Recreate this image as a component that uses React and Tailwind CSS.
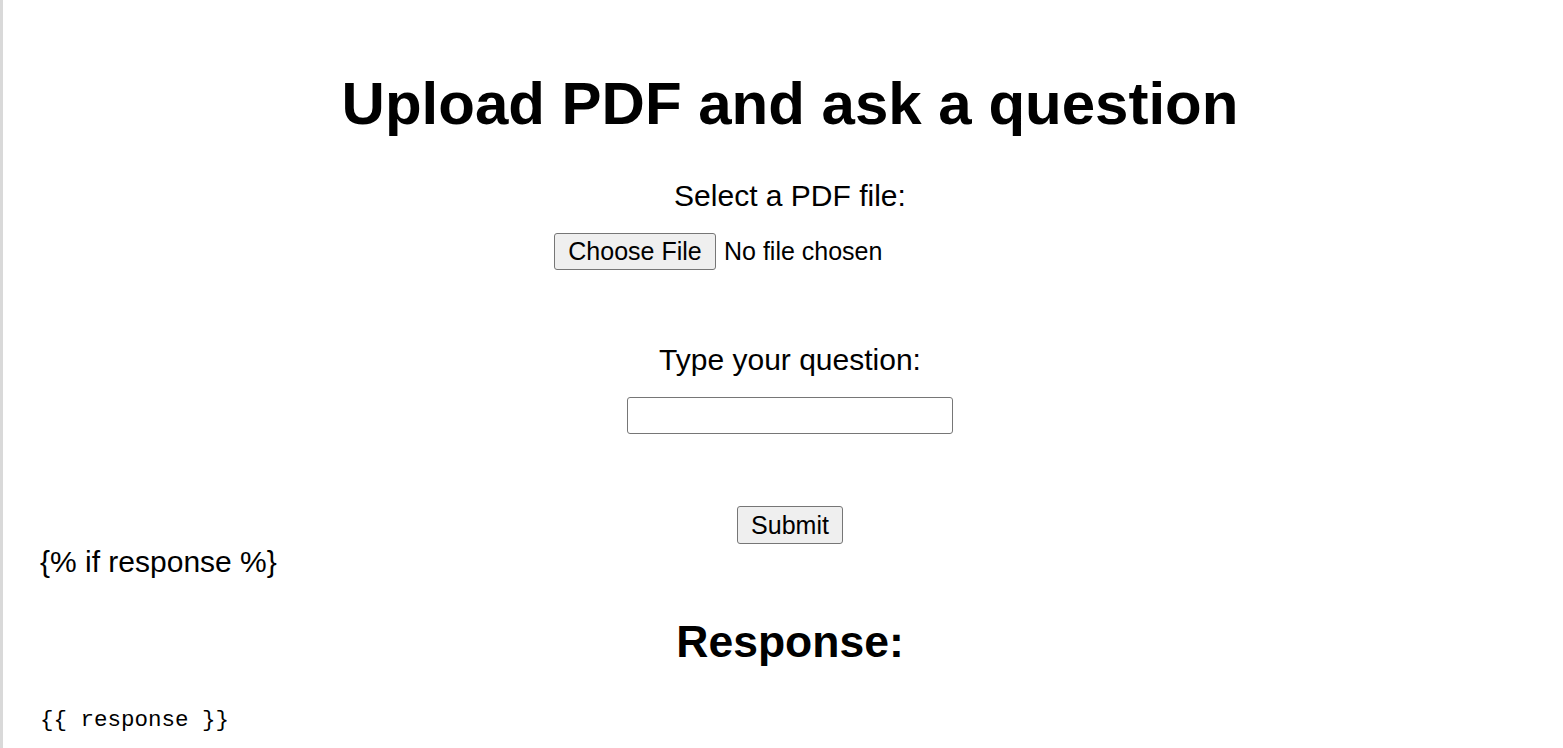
import React from "react";

const App = () => {
  return (
    <div className="min-h-screen bg-white border-l-[3px] border-[#d9d9d9] font-['Liberation_Sans',Arial,sans-serif] text-black">
      <div className="flex flex-col pl-[37px] pr-[23px] pt-[69px]">
        <h1 className="text-center text-[60px] leading-[70px] font-bold">
          Upload PDF and ask a question
        </h1>

        <form className="flex flex-col items-center">
          <label htmlFor="pdf" className="mt-[39px] text-[30px] leading-[36px]">
            Select a PDF file:
          </label>
          <div className="mt-[19px] flex items-center w-[472px] h-[37px]">
            <span className="flex items-center justify-center w-[162px] h-[37px] bg-[#efefef] border border-[#767676] rounded-[3px] text-[25px]">
              Choose File
            </span>
            <span className="ml-[8px] text-[25px]">No file chosen</span>
          </div>

          <label htmlFor="question" className="mt-[72px] text-[30px] leading-[36px]">
            Type your question:
          </label>
          <input
            type="text"
            id="question"
            className="mt-[19px] w-[326px] h-[37px] border border-[#767676] rounded-[3px] px-1 text-[25px] focus:outline-none"
          />

          <button
            type="submit"
            className="mt-[72px] w-[106px] h-[38px] bg-[#efefef] border border-[#767676] rounded-[3px] text-[25px]"
          >
            Submit
          </button>
        </form>

        <p className="text-[30px] leading-[36px]">{"{% if response %}"}</p>

        <h2 className="mt-[37px] text-center text-[44.5px] leading-[50px] font-bold">
          Response:
        </h2>

        <pre className="mt-[39px] font-['Liberation_Mono',monospace] text-[22.5px] leading-[28px]">
          {"{{ response }}"}
        </pre>
      </div>
    </div>
  );
};

export default App;
